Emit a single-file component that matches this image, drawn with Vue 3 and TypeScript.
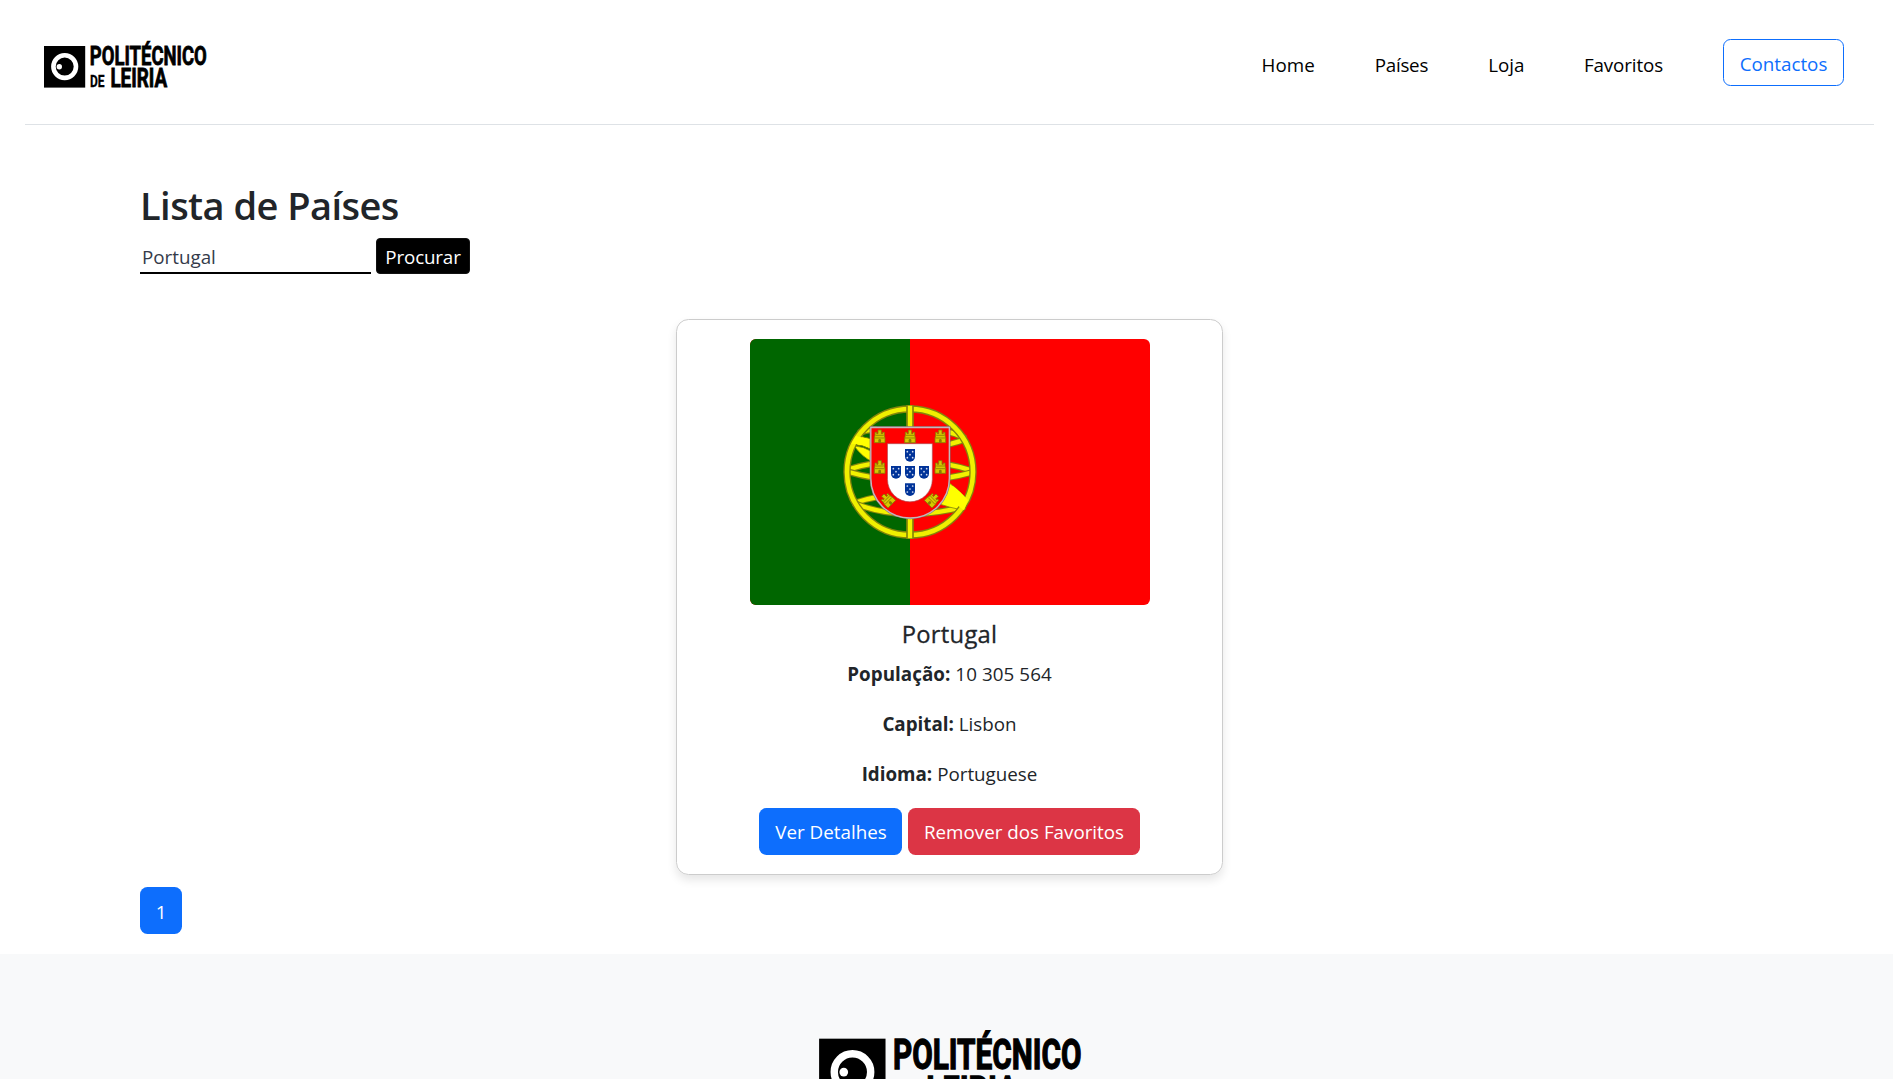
<script setup lang="ts">
import { ref } from 'vue'

interface NavLink {
  label: string
  cls: string
}

interface Country {
  name: string
  population: string
  capital: string
  language: string
}

const links: NavLink[] = [
  { label: 'Home', cls: 'home' },
  { label: 'Países', cls: 'countries' },
  { label: 'Loja', cls: 'shop' },
  { label: 'Favoritos', cls: 'favourites' },
]

const country: Country = {
  name: 'Portugal',
  population: '10 305 564',
  capital: 'Lisbon',
  language: 'Portuguese',
}

const search = ref('Portugal')

const castles: string[] = [
  'translate(149 124)',
  'translate(240 124)',
  'translate(331 124)',
  'translate(149 216)',
  'translate(331 216)',
  'translate(172 314) rotate(-45)',
  'translate(308 314) rotate(45)',
]

const quinas: number[][] = [
  [240, 181],
  [198, 232],
  [240, 232],
  [282, 232],
  [240, 284],
]

const bezants: number[][] = [
  [-8, -11],
  [8, -11],
  [0, -2],
  [-8, 7],
  [8, 7],
]

// Meridians and parallels of the armillary sphere
const hoops: string[] = [
  'M45 226Q240 164 436 230',
  'M45 228Q240 286 436 230',
  'M86 114Q110 104 140 104',
  'M340 108Q376 114 406 130',
  'M300 158Q370 148 408 132',
  'M70 325Q240 266 404 338',
  'M70 324Q220 384 405 334',
]
</script>

<template>
  <svg width="0" height="0" class="defs" aria-hidden="true">
    <symbol id="logo" viewBox="0 -6 163 49" overflow="visible">
      <rect x="0" y="0" width="41.2" height="41.6" />
      <circle cx="20.7" cy="20.6" r="11.3" fill="none" stroke="#fff" stroke-width="4.6" />
      <circle cx="15.3" cy="20.7" r="2.7" fill="#fff" />
      <g font-family="Roboto, sans-serif" font-weight="700" stroke="#000" stroke-width=".8">
        <text x="45.8" y="19.1" font-size="26" textLength="117" lengthAdjust="spacingAndGlyphs">POLITÉCNICO</text>
        <text x="46" y="41.3" font-size="16" textLength="14.6" lengthAdjust="spacingAndGlyphs" stroke-width=".3">DE</text>
        <text x="66.4" y="41.2" font-size="25" textLength="56.8" lengthAdjust="spacingAndGlyphs">LEIRIA</text>
      </g>
    </symbol>
  </svg>

  <header class="top">
    <svg class="logo"><use href="#logo" /></svg>
    <nav class="nav">
      <a v-for="l in links" :key="l.label" :class="['link', l.cls]">{{ l.label }}</a>
      <a class="btn outline">Contactos</a>
    </nav>
  </header>

  <main class="content">
    <h1>Lista de Países</h1>
    <form class="search" @submit.prevent>
      <input v-model="search" type="text" />
      <button class="find">Procurar</button>
    </form>

    <article class="card">
      <svg class="flag" viewBox="0 0 400 266">
        <rect width="400" height="266" fill="#f00" />
        <rect width="160" height="266" fill="#060" />
        <g transform="translate(80 56) scale(.33333)">
          <g v-for="h in hoops" :key="h" fill="none">
            <path :d="h" stroke="#84840c" stroke-width="20" />
            <path :d="h" stroke="#f2f200" stroke-width="13" />
          </g>
          <path d="M72 152Q100 154 130 172V202Q96 186 72 152Z" fill="#ff0" stroke="#8c8c08" stroke-width="2.5" />
          <path d="M78 121L130 133V166Q98 148 62 148Z" fill="#ff0" stroke="#7c7c08" stroke-width="3" />
          <path d="M350 258Q385 282 412 314L400 346Q360 338 318 324Z" fill="#ff0" stroke="#8c8c08" stroke-width="2.5" />
          <circle cx="240" cy="231" r="189" fill="none" stroke="#84840c" stroke-width="22" />
          <circle cx="240" cy="231" r="189" fill="none" stroke="#f0f000" stroke-width="14" />
          <path d="M78 123L120 133V156Q94 146 64 146ZM368 272Q392 290 414 315L402 346L362 315Z" fill="#ff0" />
          <path d="M240 30V432" stroke="#84840c" stroke-width="23" />
          <path d="M240 32V430" stroke="#f4f400" stroke-width="13" />
          <path d="M122.500 97.500H358V250A117.750 119 0 0 1 122.500 250Z" fill="#f00" stroke="#857078" stroke-width="7" />
          <path d="M122.500 97.500H358V250A117.750 119 0 0 1 122.500 250Z" fill="#f00" stroke="#c4b6ba" stroke-width="4" />
          <path d="M172.500 146H307V253A67.250 67.500 0 0 1 172.500 253Z" fill="#fff" stroke="#b05058" stroke-width="2" />
          <g v-for="c in castles" :key="c" :transform="c">
            <path d="M-16 19V5L-14 -3V-12H-9V-8H-5V-19H5V-8H9V-12H14V-3L16 5V19Z" fill="#d6c800" stroke="#8a7d00" stroke-width="2.500" />
            <path d="M-15 5H15M-12 -3H12" stroke="#8a7d00" stroke-width="2.500" />
            <path d="M-4 19V12A4 4 0 0 1 4 12V19Z" fill="#8a7d00" />
          </g>
          <g v-for="q in quinas" :key="q.join()" :transform="`translate(${q[0]} ${q[1]})`">
            <path d="M-15 -19H15V4A15 15 0 0 1 -15 4Z" fill="#039" />
            <circle v-for="b in bezants" :key="b.join()" :cx="b[0]" :cy="b[1]" r="2.600" fill="#d4def2" />
          </g>
        </g>
      </svg>
      <h5>{{ country.name }}</h5>
      <p><strong class="pop">População:</strong> <span class="num">{{ country.population }}</span></p>
      <p><strong>Capital:</strong> <span>{{ country.capital }}</span></p>
      <p><strong>Idioma:</strong> <span>{{ country.language }}</span></p>
      <div class="actions">
        <button class="btn primary">Ver Detalhes</button>
        <button class="btn danger">Remover dos Favoritos</button>
      </div>
    </article>

    <button class="btn page">1</button>
  </main>

  <footer class="footer">
    <svg class="logo-lg"><use href="#logo" /></svg>
  </footer>
</template>

<style>
html,
body {
  margin: 0;
  height: 1079px;
  overflow: hidden;
  background: #fff;
}
#app {
  height: 1079px;
  overflow: hidden;
  font-family: "Open Sans", "Noto Sans", sans-serif;
  font-size: 18.8px;
  line-height: 30px;
  color: #212529;
}
</style>

<style scoped>
.defs {
  display: block;
}
.top {
  box-sizing: border-box;
  height: 125px;
  margin: 0 19px 0 25px;
  padding: 39px 30px 0 19px;
  border-bottom: 1px solid #dee2e6;
  display: flex;
  align-items: flex-start;
  justify-content: space-between;
}
.logo {
  width: 163px;
  height: 49px;
  margin-top: 1px;
  overflow: visible;
}
.nav {
  display: flex;
  align-items: flex-start;
  white-space: nowrap;
}
.link {
  color: #000;
  padding-top: 11px;
  margin-right: 60px;
}
.countries {
  letter-spacing: -0.25px;
}
.shop {
  margin-right: 59.5px;
}
.favourites {
  letter-spacing: -0.12px;
}
.btn {
  box-sizing: border-box;
  display: flex;
  align-items: center;
  justify-content: center;
  height: 47px;
  padding: 0;
  border: 1px solid transparent;
  border-radius: 7.5px;
  font: inherit;
  color: #fff;
  white-space: nowrap;
}
.outline {
  width: 121px;
  padding-top: 2px;
  color: #0d6efd;
  border-color: #0d6efd;
}
.content {
  box-sizing: border-box;
  height: 829px;
  padding: 56px 134px 0 140px;
  display: flex;
  flex-direction: column;
  align-items: flex-start;
}
h1 {
  margin: 0;
  font-size: 38px;
  font-weight: 600;
  line-height: 48px;
  letter-spacing: -0.55px;
  white-space: nowrap;
}
.search {
  display: flex;
  align-items: flex-start;
  gap: 5px;
  margin-top: 9px;
}
input {
  box-sizing: border-box;
  width: 231px;
  height: 36px;
  padding: 4px 2px 0;
  border: 0;
  border-bottom: 2px solid #000;
  outline: 0;
  background: none;
  font: inherit;
  color: #343a4a;
}
.find {
  box-sizing: border-box;
  width: 94px;
  height: 36px;
  padding: 2px 0 0;
  border: 1px solid #111;
  border-radius: 4px;
  background: #000;
  color: #fff;
  font: inherit;
  line-height: 30px;
  letter-spacing: -0.15px;
}
.card {
  box-sizing: border-box;
  width: 547px;
  height: 556px;
  margin-top: 45px;
  padding-top: 19px;
  align-self: center;
  border: 1px solid #ccc;
  border-radius: 12.5px;
  box-shadow: 0 5px 10px rgba(0, 0, 0, 0.1);
  display: flex;
  flex-direction: column;
  align-items: center;
}
.flag {
  display: block;
  flex: none;
  width: 400px;
  height: 266px;
  border-radius: 6px;
}
h5 {
  margin: 14px 0 10px;
  font-size: 23.8px;
  font-weight: 500;
  line-height: 30px;
  letter-spacing: 0.25px;
  -webkit-text-stroke: 0.3px #212529;
}
p {
  margin: 0 0 20px;
  line-height: 30px;
  white-space: pre;
}
strong {
  font-weight: 700;
}
.pop {
  letter-spacing: 0.05px;
}
.num {
  letter-spacing: 0.08px;
}
.actions {
  display: flex;
  gap: 6px;
  margin-top: -1px;
}
.primary {
  width: 143px;
  padding-left: 1px;
  background: #0d6efd;
}
.danger {
  width: 232px;
  background: #dc3545;
}
.page {
  width: 42px;
  margin-top: 12px;
  padding-top: 2px;
  background: #0d6efd;
}
.footer {
  height: 125px;
  overflow: hidden;
  background: #f8f9fa;
  display: flex;
  padding: 75px 0 0 819px;
  box-sizing: border-box;
}
.logo-lg {
  flex: none;
  width: 263px;
  height: 79px;
  overflow: visible;
}
</style>
